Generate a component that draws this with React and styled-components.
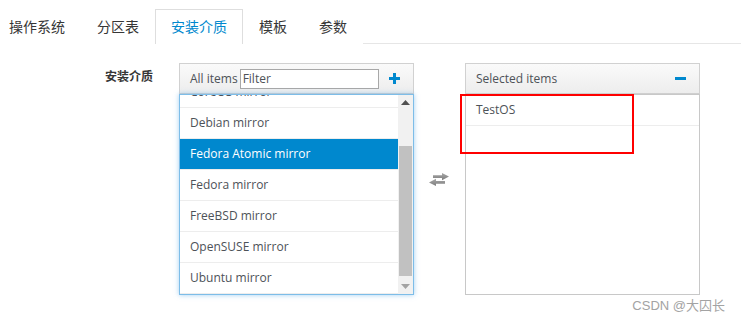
import React, { useLayoutEffect, useRef } from "react"
import styled, { createGlobalStyle } from "styled-components"

const GlobalStyle = createGlobalStyle`
  body {
    margin: 0;
    background: #fff;
    font-family: "Open Sans", "Noto Sans CJK SC", sans-serif;
    color: #363636;
  }
`

const tabs = ["操作系统", "分区表", "安装介质", "模板", "参数"]

const mirrors = [
  "CentOS mirror",
  "CoreOS mirror",
  "Debian mirror",
  "Fedora Atomic mirror",
  "Fedora mirror",
  "FreeBSD mirror",
  "OpenSUSE mirror",
  "Ubuntu mirror",
]

export default function App() {
  const viewRef = useRef(null)

  useLayoutEffect(() => {
    if (viewRef.current) viewRef.current.scrollTop = viewRef.current.scrollHeight
  }, [])

  return (
    <Page>
      <GlobalStyle />
      <TabBar>
        {tabs.map((t) => (
          <Tab key={t} $active={t === "安装介质"}>{t}</Tab>
        ))}
      </TabBar>

      <FormRow>
        <Label>安装介质</Label>
        <Panel>
          <PanelHeader>
            <HeaderTitle>All items</HeaderTitle>
            <FilterInput placeholder="Filter" />
            <HeaderAction>
              <svg width="11" height="11" viewBox="0 0 11 11">
                <rect x="4" y="0" width="3" height="11" fill="#0088ce" />
                <rect x="0" y="4" width="11" height="3" fill="#0088ce" />
              </svg>
            </HeaderAction>
          </PanelHeader>
          <ItemList $focused>
            <Viewport ref={viewRef}>
              {mirrors.map((m) => (
                <Item key={m} $selected={m === "Fedora Atomic mirror"}>{m}</Item>
              ))}
            </Viewport>
            <ScrollBar>
              <ScrollButton>
                <svg width="9" height="5" viewBox="0 0 9 5">
                  <polygon points="0,5 9,5 4.5,0" fill="#505050" />
                </svg>
              </ScrollButton>
              <Track>
                <Thumb />
              </Track>
              <ScrollButton>
                <svg width="9" height="5" viewBox="0 0 9 5">
                  <polygon points="0,0 9,0 4.5,5" fill="#a3a3a3" />
                </svg>
              </ScrollButton>
            </ScrollBar>
          </ItemList>
        </Panel>

        <SwapColumn>
          <svg width="22" height="13" viewBox="0 0 22 13">
            <defs>
              <linearGradient id="ag" x1="0" y1="0" x2="0" y2="1">
                <stop offset="0" stopColor="#a8a8a8" />
                <stop offset="1" stopColor="#7d7d7d" />
              </linearGradient>
            </defs>
            <path d="M5 2.3H14V0L21 3.6L14 7.2V5.1H5Z" fill="url(#ag)" />
            <path d="M17 8H8V5.8L1 9.4L8 13V10.8H17Z" fill="url(#ag)" />
          </svg>
        </SwapColumn>

        <Panel>
          <PanelHeader>
            <HeaderTitle>Selected items</HeaderTitle>
            <HeaderAction>
              <svg width="11" height="3" viewBox="0 0 11 3">
                <rect x="0" y="0" width="11" height="3" fill="#0088ce" />
              </svg>
            </HeaderAction>
          </PanelHeader>
          <ItemList>
            <Viewport>
              <Item>TestOS</Item>
            </Viewport>
          </ItemList>
          <Highlight />
        </Panel>
      </FormRow>

      <Watermark>CSDN @大囚长</Watermark>
    </Page>
  )
}

const Page = styled.div`
  position: relative;
  width: 741px;
  height: 320px;
  overflow: hidden;
`

const TabBar = styled.div`
  display: flex;
  margin-top: 9px;
  border-bottom: 1px solid #e6e6e6;
`

const Tab = styled.div`
  height: 33px;
  line-height: 33px;
  padding: 0 15px;
  font-size: 14px;
  color: ${(p) => (p.$active ? "#0088ce" : "#363636")};
  border: 1px solid ${(p) => (p.$active ? "#dedede" : "transparent")};
  border-bottom: none;
  background: #fff;
  margin-bottom: -1px;
  padding-bottom: 1px;

  &:first-child {
    margin-left: -7px;
  }
`

const FormRow = styled.div`
  position: relative;
  display: flex;
  align-items: stretch;
  margin-top: 19px;
`

const Label = styled.div`
  width: 153px;
  margin-right: 26px;
  text-align: right;
  font-size: 12px;
  font-weight: 700;
  color: #363636;
  padding-top: 4px;
`

const Panel = styled.div`
  position: relative;
  width: 235px;
  display: flex;
  flex-direction: column;
`

const PanelHeader = styled.div`
  display: flex;
  align-items: center;
  height: 29px;
  padding: 0 10px;
  border: 1px solid #d1d1d1;
  border-bottom-color: #cfcfcf;
  background: linear-gradient(#fafafa, #ededed);
  box-sizing: content-box;
`

const HeaderTitle = styled.span`
  font-size: 12px;
  color: #4d5258;
  margin-right: 2px;
`

const FilterInput = styled.input`
  width: 139px;
  height: 20px;
  box-sizing: border-box;
  border: 1px solid #a8a8a8;
  padding: 0 2px;
  font-family: "Open Sans", sans-serif;
  font-size: 12px;
  color: #363636;
  outline: none;

  &::placeholder {
    color: #4d5258;
  }
`

const HeaderAction = styled.span`
  margin-left: auto;
  display: flex;
  align-items: center;
  padding-right: 3px;
`

const ItemList = styled.div`
  display: flex;
  height: 199px;
  border: 1px solid ${(p) => (p.$focused ? "#7dbde8" : "#c8c8c8")};
  box-shadow: ${(p) => (p.$focused ? "0 0 5px rgba(102, 175, 233, 0.6)" : "none")};
  background: #fff;
`

const Viewport = styled.div`
  flex: 1;
  overflow: hidden;
`

const ScrollBar = styled.div`
  width: 15px;
  display: flex;
  flex-direction: column;
  background: #f1f1f1;
`

const ScrollButton = styled.div`
  height: 15px;
  display: flex;
  align-items: center;
  justify-content: center;
`

const Track = styled.div`
  flex: 1;
  display: flex;
  flex-direction: column;
  justify-content: flex-end;
  padding: 0 1px 3px;
`

const Thumb = styled.div`
  height: 130px;
  background: #c1c1c1;
`

const Item = styled.div`
  height: 30px;
  line-height: 30px;
  padding: 0 10px;
  font-size: 12px;
  border-bottom: 1px solid #ededed;
  color: ${(p) => (p.$selected ? "#fff" : "#4d5258")};
  background: ${(p) => (p.$selected ? "#0088ce" : "transparent")};
  white-space: nowrap;
`

const SwapColumn = styled.div`
  width: 51px;
  display: flex;
  align-items: center;
  justify-content: center;
  padding-top: 1px;
  padding-right: 1px;
  box-sizing: border-box;
`

const Highlight = styled.div`
  position: absolute;
  left: -5px;
  top: 31px;
  width: 170px;
  height: 56px;
  border: 2px solid #f00;
`

const Watermark = styled.div`
  position: absolute;
  right: 16px;
  top: 295px;
  font-family: "Liberation Sans", "Noto Sans CJK SC", sans-serif;
  font-size: 13px;
  color: #a3a3a3;
`
